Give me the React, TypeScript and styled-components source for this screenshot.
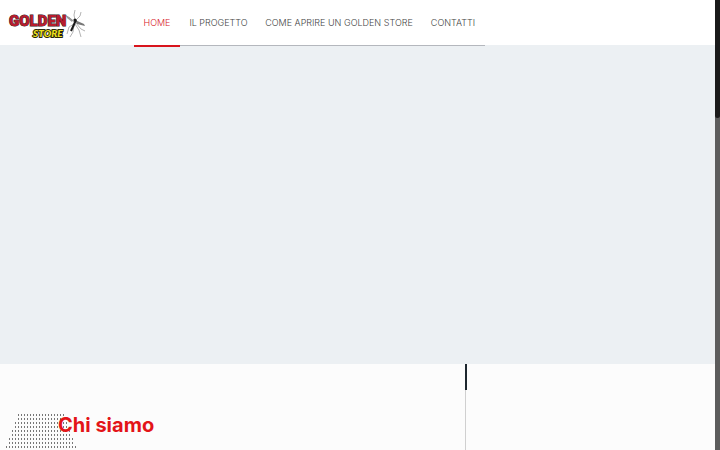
import React from "react";
import styled, { createGlobalStyle } from "styled-components";

const GlobalStyle = createGlobalStyle`
  * { box-sizing: border-box; }
  body { margin: 0; background: #fcfcfc; font-family: Inter, sans-serif; overflow: hidden; }
`;

const Page = styled.div`
  display: grid;
  grid-template-columns: minmax(0, 1fr) 5px;
  height: 100vh;
  overflow: hidden;
`;

const Content = styled.div`
  display: flex;
  flex-direction: column;
  min-height: 100vh;
`;

const Header = styled.header`
  position: relative;
  z-index: 1;
  display: flex;
  align-items: flex-start;
  height: 45px;
  background: #fff;
`;

const LogoLink = styled.a`
  display: block;
  margin: 7px 48px 0 8px;
  line-height: 0;
`;

const Nav = styled.nav`
  display: grid;
  grid-template-columns: 46px 77px 164px 64px;
  height: 46px;
  border-bottom: 1px solid #b4b7bd;
`;

const NavLink = styled.a<{ $active?: boolean }>`
  display: flex;
  align-items: center;
  justify-content: center;
  height: 47px;
  padding-bottom: ${(p) => (p.$active ? "0" : "2px")};
  border-bottom: ${(p) => (p.$active ? "2px solid #d8141c" : "0")};
  color: ${(p) => (p.$active ? "#d8202a" : "#444")};
  font: 300 9px Inter, sans-serif;
  white-space: nowrap;
  text-decoration: none;
`;

const Hero = styled.section`
  flex: none;
  height: 319px;
  background: #ecf0f3;
`;

const About = styled.section`
  display: grid;
  grid-template-columns: 65fr 35fr;
  flex: 1;
  background: #fcfcfc;
`;

const Intro = styled.div`
  position: relative;
  padding: 48px 0 0 58px;
`;

const Dots = styled.svg`
  position: absolute;
  left: 6px;
  top: 50px;
`;

const Title = styled.h2`
  position: relative;
  margin: 0;
  color: #e31418;
  font: 700 20px/26px Inter, sans-serif;
`;

const Divider = styled.div`
  border-left: 1px solid #d0d0d0;
  &::before {
    content: "";
    display: block;
    width: 2px;
    height: 26px;
    margin-left: -1px;
    background: #1d272e;
  }
`;

const Track = styled.div`
  background: #5c5c5c;
`;

const Thumb = styled.div`
  height: 118px;
  border-radius: 0 0 3px 3px;
  background: #1a1a1a;
`;

const links = ["HOME", "IL PROGETTO", "COME APRIRE UN GOLDEN STORE", "CONTATTI"];

function Logo() {
  return (
    <svg width="78" height="33" viewBox="8 7 78 33" role="img" aria-label="Golden Store">
      <g fill="none" stroke="#666" strokeWidth=".5">
        <path d="M75 20 74 15 75 10M76 20 80 16 81 12M74 22 70 18 66 16M74 24 69 27 67 34M75 24 79 30 81 37M76 23 81 29 85 31M74 25 73 32 70 37" />
      </g>
      <path d="M75 20 84 24 85 26 77 24Z" fill="#777" />
      <path d="M73 20 66 15 67 18 72 22Z" fill="#999" />
      <path d="M76 20 71 31" stroke="#181818" strokeWidth="2" />
      <circle cx="75" cy="20" r="1.6" fill="#181818" />
      <text x="9" y="26" fontFamily="Roboto, sans-serif" fontWeight="900" fontSize="15" fill="#b81c2e" stroke="#351015" strokeWidth="1" paintOrder="stroke">GOLDEN</text>
      <text x="33" y="37" fontFamily="Lato, sans-serif" fontStyle="italic" fontWeight="900" fontSize="10" fill="#eee01e" stroke="#29270c" strokeWidth="2" paintOrder="stroke">STORE</text>
    </svg>
  );
}

const rowInsets = [12, 12, 9, 9, 6, 6, 3, 3, 0, 0];

export default function App() {
  return (
    <Page>
      <GlobalStyle />
      <Content>
        <Header>
          <LogoLink href="#home"><Logo /></LogoLink>
          <Nav>
            {links.map((label, i) => (
              <NavLink key={label} href="#" $active={i === 0}>{label}</NavLink>
            ))}
          </Nav>
        </Header>
        <Hero />
        <About>
          <Intro>
            <Dots width="70" height="36" viewBox="0 0 70 36" aria-hidden="true">
              {rowInsets.map((inset, r) => (
                <line key={r} x1={inset} x2={70 - inset} y1={1 + r * 4} y2={1 + r * 4} stroke="#777" strokeWidth="2" strokeDasharray="1 2" />
              ))}
            </Dots>
            <Title>Chi siamo</Title>
          </Intro>
          <Divider />
        </About>
      </Content>
      <Track><Thumb /></Track>
    </Page>
  );
}
